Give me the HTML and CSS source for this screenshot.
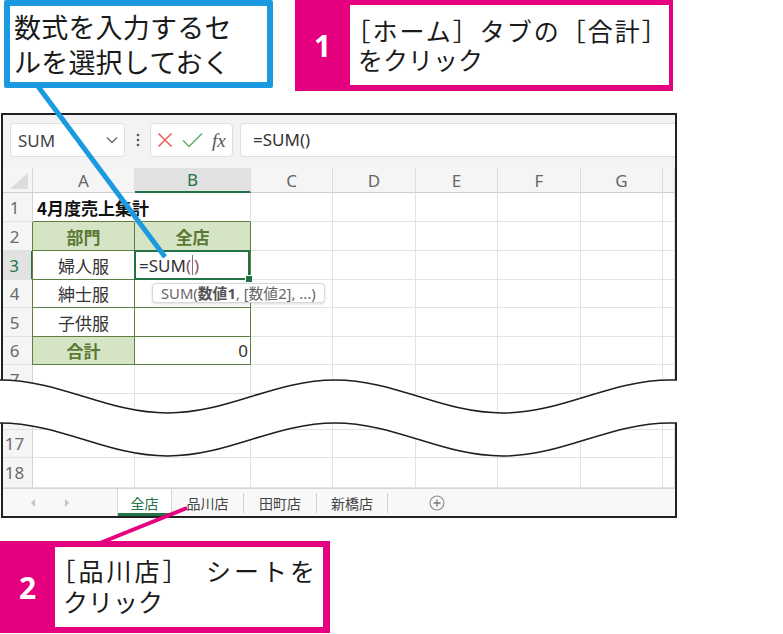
FILE: index.html
```html
<!DOCTYPE html>
<html lang="ja">
<head>
<meta charset="utf-8">
<title>SUM</title>
<link rel="stylesheet" href="styles.css">
</head>
<body>
<div class="page">
  <div class="callouts">
    <div class="note-blue">
      <div class="bl">数式を入力するセ</div>
      <div class="bl">ルを選択しておく</div>
    </div>
    <div class="note-pink note-1">
      <div class="badge">1</div>
      <div class="note-body">
        <div class="ln l1">［ホーム］タブの［合計］</div>
        <div class="ln">をクリック</div>
      </div>
    </div>
  </div>

  <section class="win win-top">
    <div class="fbar">
      <div class="namebox"><span>SUM</span>
        <svg class="chev" width="12" height="8" viewBox="0 0 12 8"><path d="M1 1.5 L6 6.5 L11 1.5" fill="none" stroke="#666" stroke-width="1.3"/></svg>
      </div>
      <div class="dots">
        <svg width="4" height="14" viewBox="0 0 4 14"><circle cx="2" cy="2" r="1.3" fill="#555"/><circle cx="2" cy="7" r="1.3" fill="#555"/><circle cx="2" cy="12" r="1.3" fill="#555"/></svg>
      </div>
      <div class="fbtns">
        <svg class="ic-x" width="16" height="16" viewBox="0 0 16 16"><path d="M1.5 1.5 L14.5 14.5 M14.5 1.5 L1.5 14.5" fill="none" stroke="#e35d5d" stroke-width="1.5"/></svg>
        <svg class="ic-ok" width="21" height="16" viewBox="0 0 21 16"><path d="M1 8.5 L7 14.5 L20 1.5" fill="none" stroke="#5fae6e" stroke-width="1.5"/></svg>
        <span class="fx">fx</span>
      </div>
      <div class="finput">=SUM()</div>
    </div>

    <div class="grid grid-top">
      <div class="c corner"><svg width="18" height="16" viewBox="0 0 18 16"><path d="M18 0 L18 16 L0 16 Z" fill="#dcdcdc"/></svg></div>
      <div class="c ch">A</div><div class="c ch sel">B</div><div class="c ch">C</div><div class="c ch">D</div><div class="c ch">E</div><div class="c ch">F</div><div class="c ch">G</div><div class="c ch"></div>

      <div class="c rh">1</div><div class="c title tt">4月度売上集計</div><div class="c tt"></div><div class="c"></div><div class="c"></div><div class="c"></div><div class="c"></div><div class="c"></div><div class="c"></div>

      <div class="c rh">2</div><div class="c t tl hd">部門</div><div class="c t hd">全店</div><div class="c"></div><div class="c"></div><div class="c"></div><div class="c"></div><div class="c"></div><div class="c"></div>

      <div class="c rh sel">3</div><div class="c t tl">婦人服</div><div class="c t act"><span class="fn">=SUM</span><span class="par">(</span><span class="caret"></span><span class="par">)</span></div><div class="c"></div><div class="c"></div><div class="c"></div><div class="c"></div><div class="c"></div><div class="c"></div>

      <div class="c rh">4</div><div class="c t tl">紳士服</div><div class="c t"></div><div class="c"></div><div class="c"></div><div class="c"></div><div class="c"></div><div class="c"></div><div class="c"></div>

      <div class="c rh">5</div><div class="c t tl">子供服</div><div class="c t"></div><div class="c"></div><div class="c"></div><div class="c"></div><div class="c"></div><div class="c"></div><div class="c"></div>

      <div class="c rh">6</div><div class="c t tl hd">合計</div><div class="c t num">0</div><div class="c"></div><div class="c"></div><div class="c"></div><div class="c"></div><div class="c"></div><div class="c"></div>

      <div class="c rh">7</div><div class="c"></div><div class="c"></div><div class="c"></div><div class="c"></div><div class="c"></div><div class="c"></div><div class="c"></div><div class="c"></div>

      <div class="c rh"></div><div class="c"></div><div class="c"></div><div class="c"></div><div class="c"></div><div class="c"></div><div class="c"></div><div class="c"></div><div class="c"></div>

      <div class="tip">SUM(<b>数値1</b>, [数値2], ...)</div>
    </div>
  </section>

  <section class="win win-bottom">
    <div class="grid grid-bottom">
      <div class="c rh"></div><div class="c"></div><div class="c"></div><div class="c"></div><div class="c"></div><div class="c"></div><div class="c"></div><div class="c"></div><div class="c"></div>
      <div class="c rh">17</div><div class="c"></div><div class="c"></div><div class="c"></div><div class="c"></div><div class="c"></div><div class="c"></div><div class="c"></div><div class="c"></div>
      <div class="c rh">18</div><div class="c"></div><div class="c"></div><div class="c"></div><div class="c"></div><div class="c"></div><div class="c"></div><div class="c"></div><div class="c"></div>
    </div>
    <div class="tabs">
      <div class="nav">
        <svg width="6" height="10" viewBox="0 0 6 10"><path d="M5 1 L1 5 L5 9 Z" fill="#c4c4c4"/></svg>
        <svg width="6" height="10" viewBox="0 0 6 10"><path d="M1 1 L5 5 L1 9 Z" fill="#c4c4c4"/></svg>
      </div>
      <div class="tab on w1">全店</div>
      <div class="tab w2">品川店</div>
      <div class="tab w3">田町店</div>
      <div class="tab w4">新橋店</div>
      <svg class="plus" width="16" height="16" viewBox="0 0 16 16"><circle cx="8" cy="8" r="7" fill="none" stroke="#8a8a8a" stroke-width="1.1"/><path d="M8 4.5 V11.5 M4.5 8 H11.5" stroke="#777" stroke-width="1.3"/></svg>
    </div>
  </section>

  <div class="note-pink note-2">
    <div class="badge">2</div>
    <div class="note-body">
      <div class="ln l2">［品川店］&#8194;シートを</div>
      <div class="ln">クリック</div>
    </div>
  </div>

  <svg class="overlay" width="783" height="634" viewBox="0 0 783 634">
    <path d="M-5 380 L0 380 C61 380 106.5 413 167.5 413 C228.5 413 274 380 335 380 C396 380 441.5 413 502.5 413 C563.5 413 609 380 670 380 L685 380 L685 423 L670 423 C609 423 563.5 456 502.5 456 C441.5 456 396 423 335 423 C274 423 228.5 456 167.5 456 C106.5 456 61 423 0 423 L-5 423 Z" fill="#fff"/>
    <path d="M0 380 C61 380 106.5 413 167.5 413 C228.5 413 274 380 335 380 C396 380 441.5 413 502.5 413 C563.5 413 609 380 670 380 L677 380" fill="none" stroke="#1e1e1e" stroke-width="1.5"/>
    <path d="M0 423 C61 423 106.5 456 167.5 456 C228.5 456 274 423 335 423 C396 423 441.5 456 502.5 456 C563.5 456 609 423 670 423 L677 423" fill="none" stroke="#1e1e1e" stroke-width="1.5"/>
    <line x1="37" y1="85" x2="165" y2="257" stroke="#1b9ae1" stroke-width="5"/>
    <line x1="187" y1="508" x2="100" y2="543" stroke="#e4007f" stroke-width="4"/>
  </svg>
</div>
</body>
</html>
```

FILE: styles.css
```css
* { box-sizing: border-box; }
body { margin: 0; background: #fff; }

.page {
  position: relative;
  width: 783px;
  height: 634px;
  overflow: hidden;
  background: #fff;
  font-family: "Noto Sans", "Noto Sans CJK JP", sans-serif;
  color: #222;
}

/* ---------- callouts ---------- */
.callouts { display: flex; align-items: flex-start; height: 92px; }

.note-blue {
  margin-left: 4px;
  width: 269px;
  height: 88px;
  border: 6px solid #1b9ae1;
  border-radius: 2px;
  background: #fff;
  padding: 3px 0 0 4px;
}
.bl {
  font-family: "Noto Sans CJK JP", sans-serif;
  font-size: 27px;
  line-height: 35px;
  letter-spacing: 0.2px;
  color: #1a1a1a;
  white-space: nowrap;
}

.note-pink { display: flex; background: #e4007f; }
.note-1 { margin-left: 22px; width: 378px; height: 91px; padding: 5px 5px 6px 0; }
.note-2 { margin-top: 23px; width: 330px; height: 92px; padding: 6px 7px 6px 0; }

.badge {
  width: 55px;
  flex: none;
  display: flex;
  align-items: center;
  justify-content: center;
  color: #fff;
  font-family: "Noto Sans", sans-serif;
  font-weight: 700;
  font-size: 30px;
}
.note-body {
  flex: 1;
  background: #fff;
  font-family: "Noto Sans CJK JP", sans-serif;
  color: #1a1a1a;
  white-space: nowrap;
  font-size: 25px;
}
.note-1 .note-body { padding: 11px 0 0 8px; line-height: 29px; }
.note-2 .note-body { padding: 8px 0 0 8px; line-height: 31px; }
.l1 { letter-spacing: 2px; text-indent: -12.5px; }
.l2 { letter-spacing: 3px; text-indent: -12.5px; }

/* ---------- excel window ---------- */
.win {
  margin-left: 1px;
  width: 676px;
  border: 2px solid #222;
  background: #fff;
}
.win-top { margin-top: 21px; height: 300px; border-bottom: none; overflow: hidden; }
.win-bottom { margin-top: 10px; border-top: none; }

.fbar {
  height: 53px;
  background: #f3f3f3;
  display: flex;
  align-items: flex-start;
  padding: 8px 0 0 7px;
}
.namebox {
  width: 115px;
  height: 34px;
  flex: none;
  background: #fff;
  border: 1px solid #dedede;
  border-radius: 4px;
  display: flex;
  align-items: center;
  justify-content: space-between;
  padding: 0 6px 0 7px;
  font-size: 17px;
  color: #444;
}
.dots { width: 25px; height: 34px; flex: none; display: flex; align-items: center; justify-content: center; }
.fbtns {
  width: 83px;
  height: 34px;
  flex: none;
  background: #fff;
  border: 1px solid #dedede;
  border-radius: 4px;
  display: flex;
  align-items: center;
  padding-left: 6px;
  gap: 9px;
}
.fx {
  font-family: "Liberation Serif", serif;
  font-style: italic;
  font-size: 19px;
  color: #555;
  line-height: 1;
}
.finput {
  flex: 1;
  margin-left: 7px;
  margin-right: -8px;
  height: 34px;
  background: #fff;
  border: 1px solid #dedede;
  border-radius: 4px;
  padding-left: 12px;
  font-size: 17px;
  line-height: 32px;
  color: #333;
}

/* ---------- grid ---------- */
.grid {
  display: grid;
  grid-template-columns: 30px 102px 116px 82px 83px 82px 83px 82px 1fr;
  position: relative;
}
.grid-top { grid-template-rows: 25px 29px 29px 29px 28px 29px 28px 29px 29px; }
.grid-bottom { grid-template-rows: 7px 28px 30px; }

.c {
  border-right: 1px solid #e2e2e2;
  border-bottom: 1px solid #e2e2e2;
  display: flex;
  align-items: center;
  font-size: 17px;
  white-space: nowrap;
  color: #333;
  min-width: 0;
}
.corner {
  background: #f5f5f5;
  border-right-color: #d6d6d6;
  border-bottom-color: #cfcfcf;
  justify-content: flex-end;
  align-items: flex-end;
  padding: 0 4px 3px 0;
}
.ch {
  background: #f5f5f5;
  justify-content: center;
  color: #666;
  border-right-color: #dcdcdc;
  border-bottom-color: #cfcfcf;
}
.ch.sel {
  background: #e2e2e2;
  color: #217346;
  border-bottom: 2px solid #217346;
}
.rh {
  background: #f5f5f5;
  justify-content: center;
  padding-right: 6px;
  color: #6a6a6a;
  border-right-color: #d4d4d4;
}
.rh.sel {
  background: #e2e2e2;
  color: #217346;
  border-right: 2px solid #217346;
}

.title {
  font-family: "Noto Sans CJK JP", sans-serif;
  font-weight: 700;
  font-size: 17px;
  color: #111;
  padding-left: 4px;
  overflow: visible;
  border-right-color: transparent;
}
.tt { border-bottom-color: #5e7f3f; }
.t {
  border-right-color: #5e7f3f;
  border-bottom-color: #5e7f3f;
  justify-content: center;
  font-family: "Noto Sans CJK JP", sans-serif;
}
.tl { box-shadow: -1px 0 0 #5e7f3f; }
.hd { background: #d5e4c5; color: #5a7834; font-weight: 700; }
.num { justify-content: flex-end; padding-right: 2px; font-family: "Noto Sans", sans-serif; }

.act {
  position: relative;
  justify-content: flex-start;
  padding-left: 4px;
  font-family: "Noto Sans", sans-serif;
  color: #333;
}
.act::before {
  content: "";
  position: absolute;
  left: -1px;
  top: -1px;
  right: 0;
  bottom: -1px;
  border: 2px solid #217346;
}
.act::after {
  content: "";
  position: absolute;
  right: -3px;
  bottom: -4px;
  width: 6px;
  height: 6px;
  background: #217346;
  border: 1px solid #fff;
}
.par { color: #8d4a68; }
.caret { display: inline-block; width: 1px; height: 20px; background: #777; margin: 0 1px; }

.tip {
  position: absolute;
  left: 149px;
  top: 115px;
  height: 20px;
  padding: 0 8px;
  background: #fff;
  border: 1px solid #d8d8d8;
  border-radius: 4px;
  box-shadow: 0 1px 3px rgba(0, 0, 0, 0.14);
  font-size: 14.8px;
  line-height: 18px;
  color: #666;
  white-space: nowrap;
  font-family: "Noto Sans", "Noto Sans CJK JP", sans-serif;
}
.tip b { color: #555; }

/* ---------- sheet tabs ---------- */
.tabs {
  height: 28px;
  display: flex;
  align-items: center;
  background: #f8f8f8;
  border-top: 1px solid #d6d6d6;
}
.nav { width: 114px; height: 100%; display: flex; align-items: center; padding-left: 27px; gap: 28px; flex: none; }
.tab {
  height: 20px;
  display: flex;
  align-items: center;
  justify-content: center;
  font-size: 14px;
  color: #444;
  border-right: 1px solid #d0d0d0;
  font-family: "Noto Sans CJK JP", sans-serif;
  flex: none;
}
.tab.on {
  height: 100%;
  background: #fff;
  color: #217346;
  border-left: 1px solid #d6d6d6;
  border-right: 1px solid #d6d6d6;
  box-shadow: inset 0 -3px 0 #217346;
}
.w1 { width: 55px; }
.w2 { width: 72px; }
.w3 { width: 73px; }
.w4 { width: 71px; }
.plus { margin-left: 41px; flex: none; }

/* ---------- overlay (break waves + leader lines) ---------- */
.overlay { position: absolute; left: 0; top: 0; pointer-events: none; }
```
